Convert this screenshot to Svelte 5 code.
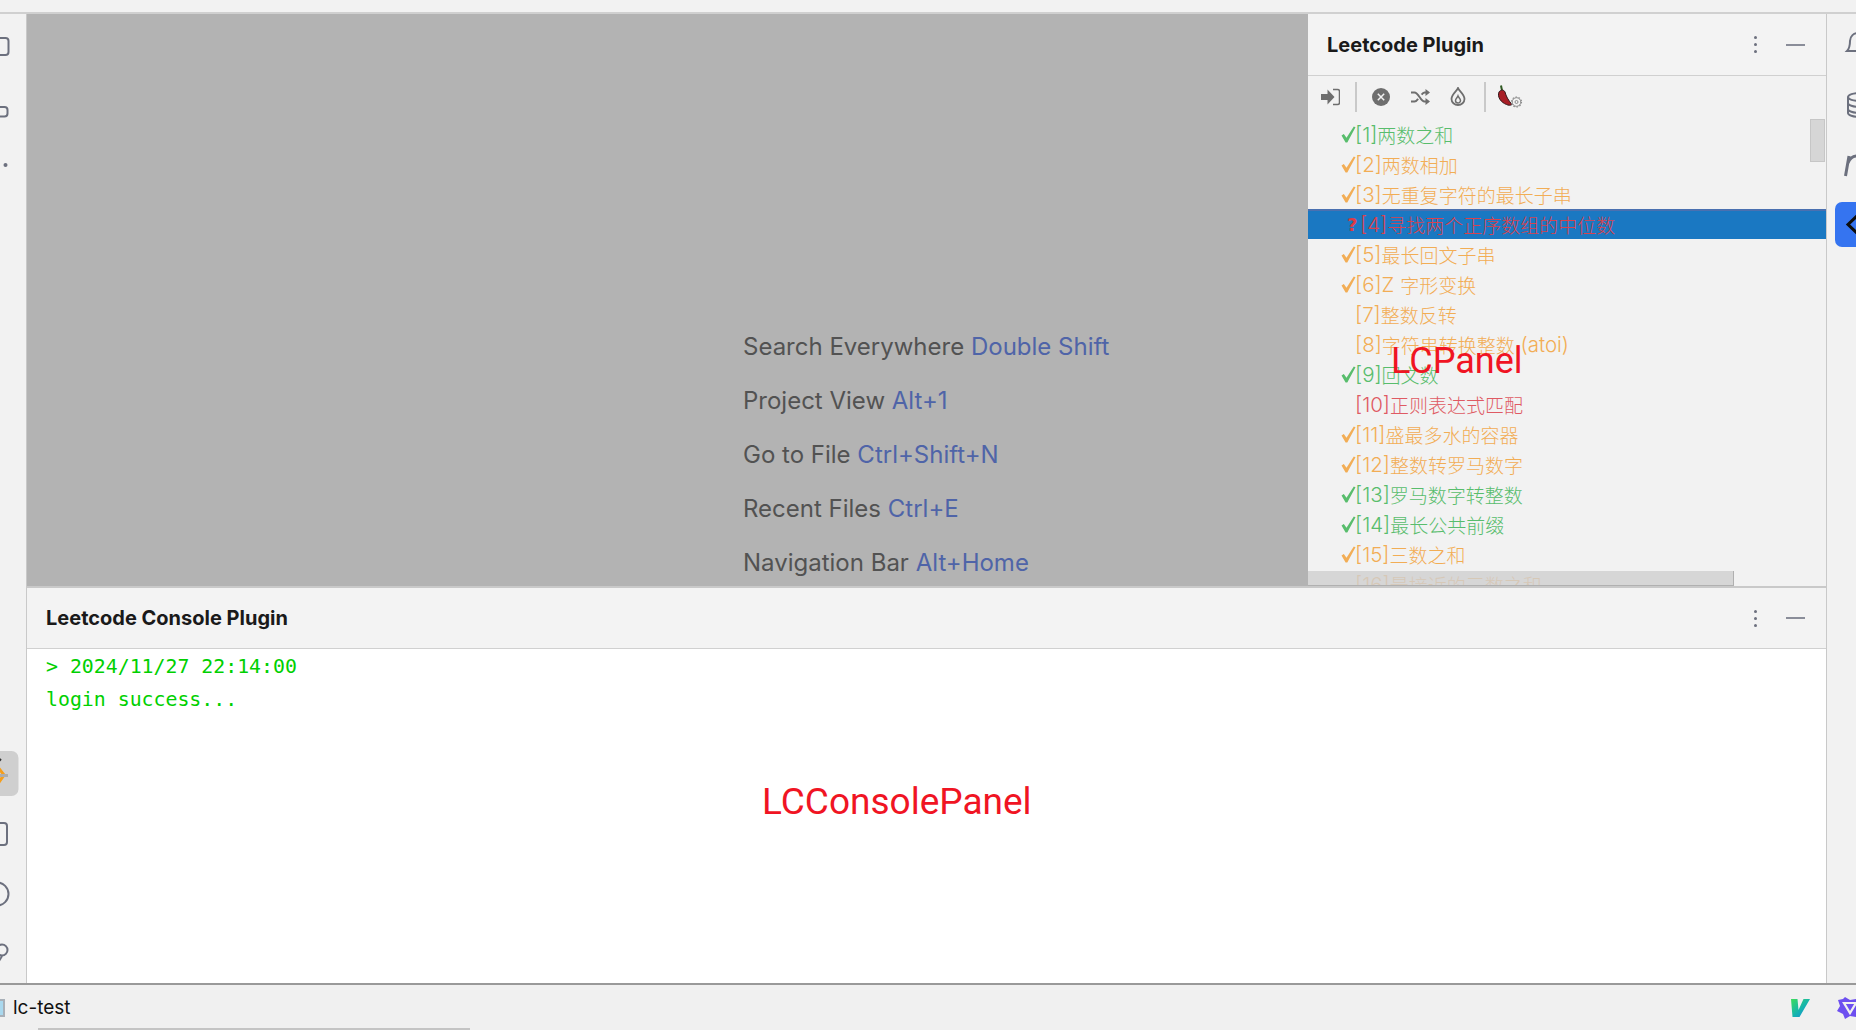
<script>
  const problems = [
    { id: 1, name: "两数之和", level: "easy", mark: "done" },
    { id: 2, name: "两数相加", level: "medium", mark: "done" },
    { id: 3, name: "无重复字符的最长子串", level: "medium", mark: "done" },
    { id: 4, name: "寻找两个正序数组的中位数", level: "hard", mark: "ask" },
    { id: 5, name: "最长回文子串", level: "medium", mark: "done" },
    { id: 6, name: "Z 字形变换", level: "medium", mark: "done" },
    { id: 7, name: "整数反转", level: "medium", mark: "" },
    { id: 8, name: "字符串转换整数 (atoi)", level: "medium", mark: "" },
    { id: 9, name: "回文数", level: "easy", mark: "done" },
    { id: 10, name: "正则表达式匹配", level: "hard", mark: "" },
    { id: 11, name: "盛最多水的容器", level: "medium", mark: "done" },
    { id: 12, name: "整数转罗马数字", level: "medium", mark: "done" },
    { id: 13, name: "罗马数字转整数", level: "easy", mark: "done" },
    { id: 14, name: "最长公共前缀", level: "easy", mark: "done" },
    { id: 15, name: "三数之和", level: "medium", mark: "done" },
    { id: 16, name: "最接近的三数之和", level: "medium", mark: "" }
  ];

  const hints = [
    ["Search Everywhere", "Double Shift"],
    ["Project View", "Alt+1"],
    ["Go to File", "Ctrl+Shift+N"],
    ["Recent Files", "Ctrl+E"],
    ["Navigation Bar", "Alt+Home"]
  ];

  // latin runs are drawn a bit larger than the CJK ones in this tree
  const pieces = (name) => name.split(/([ -~]+)/).filter(Boolean);
  const isLatin = (s) => /^[ -~]+$/.test(s);
</script>

<div class="ide">
  <div class="topbar"></div>

  <div class="middle">
    <aside class="rail left">
      <svg width="26" height="969" viewBox="0 14 26 969">
        <g fill="none" stroke="#6c707e" stroke-width="2">
          <rect x="-12" y="38" width="20.5" height="17" rx="3" />
          <rect x="-12" y="107" width="19.5" height="9.5" rx="3" />
          <rect x="-12" y="823" width="19" height="22" rx="3" />
          <circle cx="-3" cy="894" r="11.5" />
          <circle cx="2" cy="950" r="5.5" />
          <path d="M2 956l-3 5" />
        </g>
        <circle cx="5.5" cy="165" r="2" fill="#6c707e" />
        <rect x="-10" y="751" width="28.5" height="45" rx="7" fill="#cfcfcf" />
        <path d="M-3 766l7 9-7 10" fill="none" stroke="#f59e1b" stroke-width="3" />
        <path d="M-2 762l3-3" stroke="#333" stroke-width="2" />
        <rect x="-4" y="774" width="12" height="3" fill="#adadad" />
      </svg>
    </aside>

    <div class="workspace">
      <div class="upper">
        <main class="editor">
          {#each hints as [label, key]}
            <div class="hint">{label} <span class="key">{key}</span></div>
          {/each}
        </main>

        <section class="tool-panel">
          <header class="panel-head">
            <span class="panel-title">Leetcode Plugin</span>
            <span class="kebab"><i></i><i></i><i></i></span>
            <span class="minimize"></span>
          </header>

          <div class="toolbar">
            <svg class="tb login" width="19" height="18" viewBox="0 0 19 18">
              <path d="M0 6h6.500V1.500L13.500 9l-7 7.500V12H0z" fill="#6e6e6e" />
              <path d="M12 1.500h4.500a2 2 0 0 1 2 2v11a2 2 0 0 1-2 2H12" fill="none" stroke="#6e6e6e" stroke-width="1.500" />
            </svg>
            <span class="sep"></span>
            <svg class="tb cancel" width="18" height="18" viewBox="0 0 18 18">
              <circle cx="9" cy="9" r="9" fill="#6e6e6e" />
              <path d="M5.800 5.800l6.400 6.400M12.200 5.800l-6.400 6.400" stroke="#f2f2f2" stroke-width="1.500" />
            </svg>
            <svg class="tb shuffle" width="19" height="16" viewBox="0 0 19 16">
              <path d="M0 3.500h3.500c4 0 6 9 10 9H17M0 12.500h3.500c1.500 0 2.600-1.200 3.600-2.600M10.600 5.600c.9-1.200 1.900-2.100 2.900-2.100H17" fill="none" stroke="#6e6e6e" stroke-width="2" />
              <path d="M14.500 0L19 3.500 14.500 7zM14.500 9l4.500 3.500-4.500 3.500z" fill="#6e6e6e" />
            </svg>
            <svg class="tb flame" width="16" height="19" viewBox="0 0 16 19">
              <path d="M8 1c1 3 6.500 6 6.500 11a6.500 6 0 0 1-13 0C1.500 7 7 4 8 1z" fill="none" stroke="#6e6e6e" stroke-width="1.800" />
              <path d="M8 9c.5 1.500 2.500 2.500 2.500 4.500a2.500 2.500 0 0 1-5 0C5.500 11.500 7.500 10.500 8 9z" fill="none" stroke="#6e6e6e" stroke-width="1.500" />
            </svg>
            <span class="sep second"></span>
            <svg class="tb chili" width="26" height="23" viewBox="0 0 26 23">
              <path d="M4 0.500l1 5" stroke="#2f5a22" stroke-width="2" fill="none" />
              <path d="M2 7c1.500-2.500 5-2.500 6 0 1 4 3 8 7 12.500-1.500 1-3.500 1-5.500 0C4 17.500 0 12 2 7z" fill="#a81e26" stroke="#35181a" stroke-width="1" />
              <g fill="none" stroke="#8c8c8c">
                <circle cx="19.500" cy="17" r="4.300" stroke-width="1" />
                <circle cx="19.500" cy="17" r="5" stroke-width="1.200" stroke-dasharray="1.500 1.640" />
                <circle cx="19.500" cy="17" r="1.500" stroke-width="1" />
              </g>
            </svg>
          </div>

          <div class="tree">
            <ul>
              {#each problems as p}
                <li class="row {p.level}" class:selected={p.id === 4}>
                  <span class="mark" class:ask={p.mark === "ask"}>
                    {#if p.mark === "done"}
                      <svg width="15" height="17" viewBox="0 0 15 17">
                        <path d="M0.500 9.500L2.800 8l2.700 3.700L12.800 0.500 14.500 1.300 6.300 16.500H4.600z" fill="currentColor" />
                      </svg>
                    {:else if p.mark === "ask"}
                      ?
                    {/if}
                  </span>
                  <span class="idx">[{p.id}]</span>{#each pieces(p.name) as part}<span class:latin={isLatin(part)}>{part}</span>{/each}
                </li>
              {/each}
            </ul>
            <div class="thumb vertical"></div>
            <div class="thumb horizontal"></div>
            <div class="stamp panel-stamp">LCPanel</div>
          </div>
        </section>
      </div>

      <section class="console-panel">
        <header class="panel-head">
          <span class="panel-title">Leetcode Console Plugin</span>
          <span class="kebab"><i></i><i></i><i></i></span>
          <span class="minimize"></span>
        </header>
        <div class="console">
          <div>&gt; 2024/11/27 22:14:00</div>
          <div>login success...</div>
          <div class="stamp console-stamp">LCConsolePanel</div>
        </div>
      </section>
    </div>

    <aside class="rail right">
      <svg width="29" height="969" viewBox="1827 14 29 969">
        <g fill="none" stroke="#6c707e" stroke-width="2">
          <path d="M1847 51c3-3 3-6 3-10 0-5 4-8 8-8s8 3 8 8c0 4 0 7 3 10z" />
          <ellipse cx="1860" cy="97" rx="12" ry="4" />
          <path d="M1848 97v16c0 2 5 4 12 4M1848 103c0 2 5 4 12 4M1848 109c0 2 5 4 12 4" />
          <path d="M1845.500 176l3.500-20M1848 163c2-5 5-7 9-7" stroke-width="3" />
        </g>
        <rect x="1835" y="202" width="30" height="45" rx="7" fill="#3574f0" />
        <path d="M1859 214l-11 10.500 11 10.500 11-10.500z" fill="none" stroke="#0d0d0d" stroke-width="3" />
      </svg>
    </aside>
  </div>

  <footer class="statusbar">
    <span class="module-icon"></span>
    <span class="module">lc-test</span>
    <svg class="vue" width="20" height="20" viewBox="0 0 20 20">
      <defs>
        <linearGradient id="vg" x1="0" y1="0" x2="1" y2="1">
          <stop offset="0" stop-color="#3ddc5a" />
          <stop offset="0.55" stop-color="#14b3b0" />
          <stop offset="1" stop-color="#1a7fe0" />
        </linearGradient>
      </defs>
      <path d="M0 1h6.500l1 11 5-11H19L8.500 19H1.500z" fill="url(#vg)" />
    </svg>
    <svg class="star" width="19" height="24" viewBox="0 0 19 24">
      <path d="M8 1l5 3 6-1v18l-6-1-5 3-2-5-6-3 3-5-2-6 5-1z" fill="#6d4ff0" />
      <path d="M7 7h12l-6 10z" fill="none" stroke="#f0f0f0" stroke-width="2.200" />
    </svg>
    <div class="progress"></div>
  </footer>
</div>

<style>
  :global(body) {
    background: #f2f2f2;
    overflow: hidden;
  }
  .ide {
    width: 1856px;
    height: 1030px;
    display: flex;
    flex-direction: column;
    font-family: Inter, "Noto Sans CJK SC", sans-serif;
    overflow: hidden;
  }
  .topbar {
    height: 12px;
    flex: none;
    background: #f2f2f2;
    border-bottom: 2px solid #d0d0d0;
  }
  .middle {
    height: 969px;
    flex: none;
    display: flex;
  }
  .rail {
    flex: none;
    background: #f2f2f2;
    overflow: hidden;
  }
  .rail svg {
    display: block;
  }
  .rail.left {
    width: 26px;
    border-right: 1px solid #c9c9c9;
  }
  .rail.right {
    width: 29px;
    border-left: 1px solid #c9c9c9;
  }
  .workspace {
    width: 1799px;
    flex: none;
    display: flex;
    flex-direction: column;
  }
  .upper {
    height: 572px;
    flex: none;
    display: flex;
    border-bottom: 2px solid #c9c9c9;
  }
  .editor {
    width: 1281px;
    flex: none;
    background: #b3b3b3;
    padding: 306px 0 0 716px;
    box-sizing: border-box;
    overflow: hidden;
    font-size: 24px;
    color: #525252;
  }
  .hint {
    height: 54px;
    line-height: 54px;
    white-space: nowrap;
  }
  .key {
    color: #4f64a8;
  }
  .tool-panel {
    flex: 1;
    min-width: 0;
    background: #f2f2f2;
    display: flex;
    flex-direction: column;
  }
  .panel-head {
    height: 60px;
    flex: none;
    display: flex;
    align-items: center;
    padding: 0 21px 0 19px;
    background: #f3f3f3;
    border-bottom: 1px solid #d0d0d0;
  }
  .tool-panel .panel-head {
    height: 61px;
  }
  .tool-panel .panel-title {
    padding-top: 1px;
  }
  .panel-title {
    flex: 1;
    font-size: 20px;
    font-weight: 650;
    color: #1a1a1a;
  }
  .kebab {
    display: flex;
    flex-direction: column;
    gap: 4px;
    margin-right: 29px;
  }
  .kebab i {
    width: 3px;
    height: 3px;
    border-radius: 50%;
    background: #6c707e;
  }
  .minimize {
    width: 19px;
    height: 2px;
    background: #8a8d99;
  }
  .toolbar {
    height: 43px;
    flex: none;
    display: flex;
    align-items: center;
    padding: 0 0 2px 13px;
    box-sizing: border-box;
  }
  .tb {
    flex: none;
  }
  .sep {
    width: 2px;
    height: 30px;
    background: #c9c9c9;
    margin: 0 15px;
  }
  .sep.second {
    margin: 0 11px 0 18px;
  }
  .shuffle {
    margin-left: 21px;
  }
  .flame {
    margin-left: 20px;
  }
  .tree {
    flex: 1;
    min-height: 0;
    position: relative;
    overflow: hidden;
  }
  ul {
    list-style: none;
    margin: 0;
    padding: 0;
  }
  .row {
    height: 30px;
    display: flex;
    align-items: center;
    padding-left: 33px;
    box-sizing: border-box;
    font-size: 19px;
    font-weight: 300;
    white-space: pre;
  }
  .row.easy {
    color: #58bd6c;
  }
  .row.medium {
    color: #f2ad55;
  }
  .row.hard {
    color: #df5a63;
  }
  .idx,
  .latin {
    font-size: 20.5px;
  }
  .mark {
    width: 14px;
    flex: none;
    display: flex;
    font-family: "DejaVu Sans", sans-serif;
    font-size: 16px;
  }
  .mark svg {
    flex: none;
  }
  .mark.ask {
    width: 19px;
    padding-left: 6px;
    box-sizing: border-box;
    font-weight: 700;
    font-size: 18px;
    color: #de3b45;
  }
  .row.selected {
    background: #1a78c2;
    box-shadow: inset 0 2px 0 #4a70b0;
    color: #d8434f;
  }
  .thumb {
    position: absolute;
    background: rgba(206, 206, 206, 0.8);
  }
  .thumb.vertical {
    right: 1px;
    top: 0;
    width: 13px;
    height: 41px;
    border: 1px solid #c6c6c6;
  }
  .thumb.horizontal {
    left: 0;
    bottom: 0;
    width: 425px;
    height: 14px;
    border-bottom: 1px solid #b0b0b0;
    border-right: 1px solid #b0b0b0;
  }
  .stamp {
    position: absolute;
    font-family: Roboto, sans-serif;
    font-size: 37px;
    color: #f01423;
    white-space: nowrap;
  }
  .panel-stamp {
    left: 83px;
    top: 216px;
    line-height: 52px;
    font-size: 36px;
  }
  .console-panel {
    flex: 1;
    min-height: 0;
    display: flex;
    flex-direction: column;
    background: #fff;
  }
  .console {
    flex: 1;
    position: relative;
    padding: 1px 0 0 19px;
    font-family: "DejaVu Sans Mono", monospace;
    font-size: 19.85px;
    line-height: 33px;
    color: #00d000;
  }
  .console-stamp {
    left: 735px;
    top: 127px;
    line-height: 52px;
  }
  .statusbar {
    height: 45px;
    flex: none;
    display: flex;
    align-items: center;
    position: relative;
    background: #f0f0f0;
    border-top: 2px solid #999;
  }
  .module-icon {
    width: 5px;
    height: 18px;
    flex: none;
    box-sizing: border-box;
    background: #a9d8ee;
    border: 2px solid #a8b0b8;
    border-left: 0;
  }
  .module {
    flex: 1;
    margin-left: 8px;
    font-size: 19px;
    color: #111;
  }
  .vue {
    flex: none;
    margin-right: 26px;
  }
  .star {
    flex: none;
  }
  .progress {
    position: absolute;
    left: 38px;
    bottom: 0;
    width: 432px;
    height: 2px;
    background: #c4c4c4;
  }
</style>
